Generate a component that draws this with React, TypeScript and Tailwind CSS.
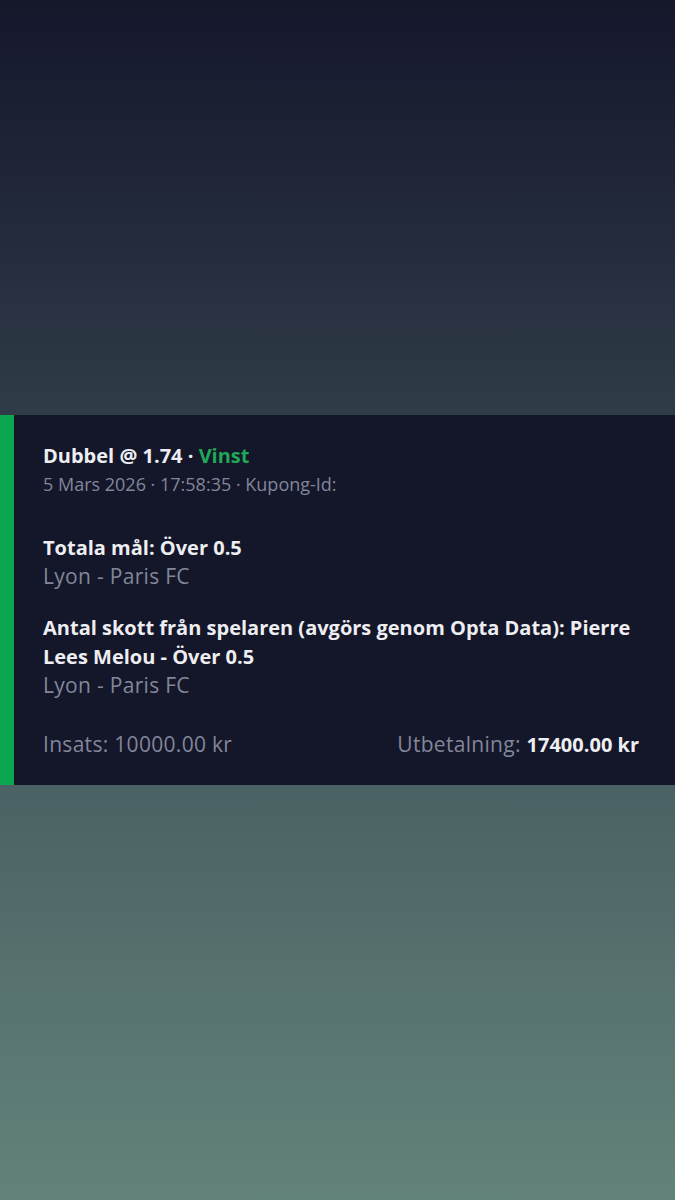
export default function App() {
  return (
    <div
      className="w-[675px] h-[1200px] flex flex-col"
      style={{
        background:
          "linear-gradient(180deg, #15172b 0%, #1c2134 10%, #2f3b47 34%, #3b4a54 50%, #4a6263 66%, #56706e 80%, #62837b 100%)",
      }}
    >
      <div className="h-[415px] shrink-0" />
      <div
        className="flex bg-[#141629] text-[20px] leading-[29px]"
        style={{ fontFamily: "'Open Sans', Roboto, sans-serif" }}
      >
        <div className="w-[14px] shrink-0 bg-[#0aa650]" />
        <div className="flex-1 pl-[29px] pr-[36px] pt-[26px] pb-[26px]">
          <div className="font-bold text-[#eeeef2]">
            Dubbel @ 1.74 · <span className="text-[#1fa855]">Vinst</span>
          </div>
          <div className="text-[#82869a] text-[18px]">
            5 Mars 2026 · 17:58:35 · Kupong-Id:
          </div>
          <div className="mt-[34px] font-bold text-[#eeeef2]">Totala mål: Över 0.5</div>
          <div className="text-[#82869a] text-[21px] tracking-[0.3px]">Lyon - Paris FC</div>
          <div className="mt-[22px] font-bold text-[#eeeef2]">
            Antal skott från spelaren (avgörs genom Opta Data): Pierre Lees Melou - Över 0.5
          </div>
          <div className="text-[#82869a] text-[21px] tracking-[0.3px]">Lyon - Paris FC</div>
          <div className="mt-[30px] flex justify-between items-baseline">
            <span className="text-[#82869a] text-[21px] tracking-[0.3px]">Insats: 10000.00 kr</span>
            <span className="text-[#82869a] text-[21px] tracking-[0.3px]">
              Utbetalning:{" "}
              <span className="font-bold text-[#eeeef2] text-[20px] tracking-normal">17400.00 kr</span>
            </span>
          </div>
        </div>
      </div>
      <div className="flex-1" />
    </div>
  );
}
